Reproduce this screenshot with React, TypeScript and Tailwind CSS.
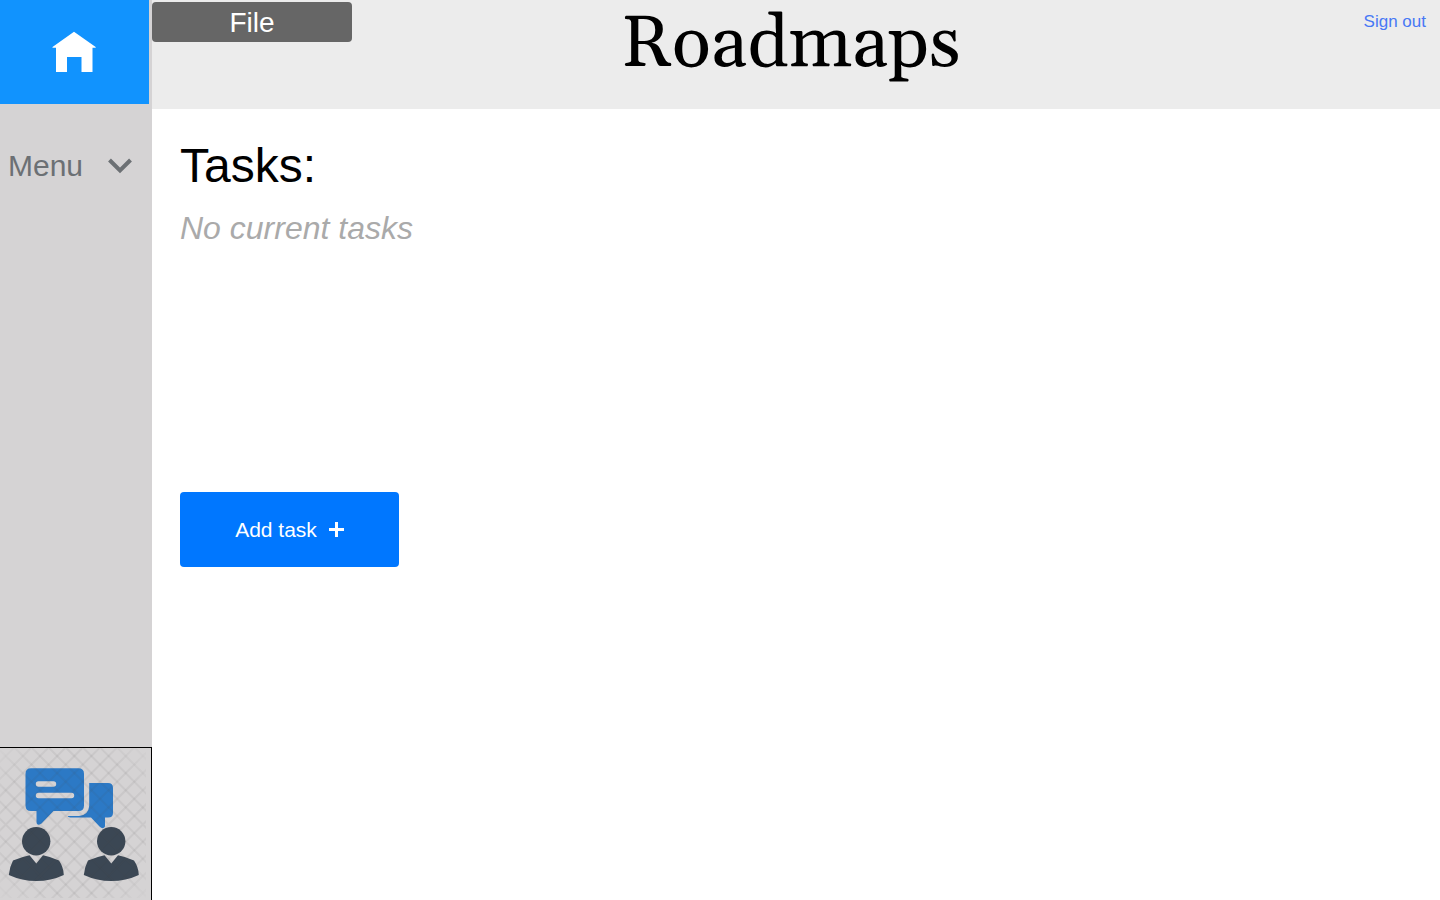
const latticeSteps = Array.from({ length: 19 }, (_, i) => i * 17.14);

function HomeIcon() {
  return (
    <svg viewBox="0 0 45 42" className="h-[42px] w-[45px]" fill="white" aria-hidden="true">
      <path d="M22 0.8 L43.700 16 V16.800 H40.500 V41 H29.500 V26 H15 V41 H4 V16.800 H0.500 V16 Z" />
    </svg>
  );
}

function Person({ x }: { x: number }) {
  return (
    <g transform={`translate(${x} 0)`} fill="#3b4754">
      <circle cx="36.2" cy="93.2" r="14.2" />
      <path d="M29.5 107.200 L36.300 115.500 L43 107.200 Q52 109 59 112.500 Q63.500 119 63.800 127 Q51 133 36.300 133 Q22 133 8.800 127 Q9.500 119 13 112.500 Q21 109 29.500 107.200 Z" />
    </g>
  );
}

function ChatIcon() {
  return (
    <svg viewBox="0 0 151 152" className="h-[152px] w-full" aria-hidden="true">
      <defs>
        <radialGradient id="fade" cx="50%" cy="50%" r="70%">
          <stop offset="0.7" stopColor="white" />
          <stop offset="1" stopColor="white" stopOpacity="0.15" />
        </radialGradient>
        <mask id="edge">
          <rect width="146" height="150" fill="url(#fade)" />
        </mask>
      </defs>
      <path fill="#2c79c5" d="M31 20.300 H78.500 Q84 20.300 84 25.800 V57.500 Q84 63 78.500 63 H53.500 L41.500 75.500 Q36.500 78.500 36.500 74 V63 H31 Q25.500 63 25.500 57.500 V25.800 Q25.500 20.300 31 20.300 Z" />
      <path fill="#2c79c5" d="M89.200 35 H108 Q113 35 113 40 V65 Q113 69.500 108 69.500 H105 V78.500 Q103 82 99.500 78.500 L91 69.500 H70 Q67 68.500 68 68 H79 Q88.500 67 89.200 58 Z" />
      <path d="M38.500 36 H53.500 M38.500 47.500 H71.500" stroke="#d5d3d4" strokeWidth="5.400" strokeLinecap="round" />
      <Person x={0} />
      <Person x={75} />
      <g mask="url(#edge)" stroke="#4a4a4a" strokeOpacity="0.08" strokeWidth="2">
        {latticeSteps.map((v) => (
          <path key={v} d={`M${v - 156.5} 0 l152 152 M${v - 3.4} 0 l-152 152`} />
        ))}
      </g>
    </svg>
  );
}

export default function App() {
  return (
    <div className="flex min-h-screen bg-white font-['Liberation_Sans',Arial,sans-serif]">
      <aside className="flex w-[152px] shrink-0 flex-col bg-[#d5d3d4]">
        <a href="#home" aria-label="Home" className="mr-[3px] flex h-[104px] items-center justify-center bg-[#1193fe]">
          <HomeIcon />
        </a>
        <button type="button" className="mt-10 flex h-11 items-center justify-between pr-5 pl-2 text-[30px] text-[#6c7074]">
          <span className="pb-0.5">Menu</span>
          <svg viewBox="0 0 24 16" className="h-4 w-6" fill="none" stroke="currentColor" strokeWidth="4" aria-hidden="true">
            <path d="M1.500 2 L12 12.500 L22.500 2" />
          </svg>
        </button>
        <a href="#chat" aria-label="Chat" className="mt-auto block border-t border-r border-black">
          <ChatIcon />
        </a>
      </aside>
      <div className="flex-1">
        <header className="grid h-[109px] grid-cols-[1fr_auto_1fr] items-start bg-[#ececec]">
          <button type="button" className="mt-0.5 h-10 w-[200px] rounded bg-[#666] pb-1 text-[28px] text-white">
            File
          </button>
          <h1 className="pr-2.5 font-[Georgia,Gelasio,'Liberation_Serif',serif] text-[72px] leading-[90px] text-black">Roadmaps</h1>
          <a href="#sign-out" className="mt-[11px] mr-3.5 justify-self-end text-[17px] leading-[22px] text-[#4778f5]">
            Sign out
          </a>
        </header>
        <main className="flex flex-col items-start px-7 pt-7">
          <h2 className="text-5xl leading-[58px] text-black">Tasks:</h2>
          <p className="mt-3 text-[32px] leading-[42px] text-[#aaa] italic">No current tasks</p>
          <button type="button" className="mt-[243px] flex h-[75px] w-[219px] items-center justify-center gap-3 rounded bg-[#0077ff] text-[21px] text-white">
            Add task
            <svg viewBox="0 0 15 15" className="h-[15px] w-[15px]" stroke="currentColor" strokeWidth="3" aria-hidden="true">
              <path d="M7.500 0 V15 M0 7.500 H15" />
            </svg>
          </button>
        </main>
      </div>
    </div>
  );
}
